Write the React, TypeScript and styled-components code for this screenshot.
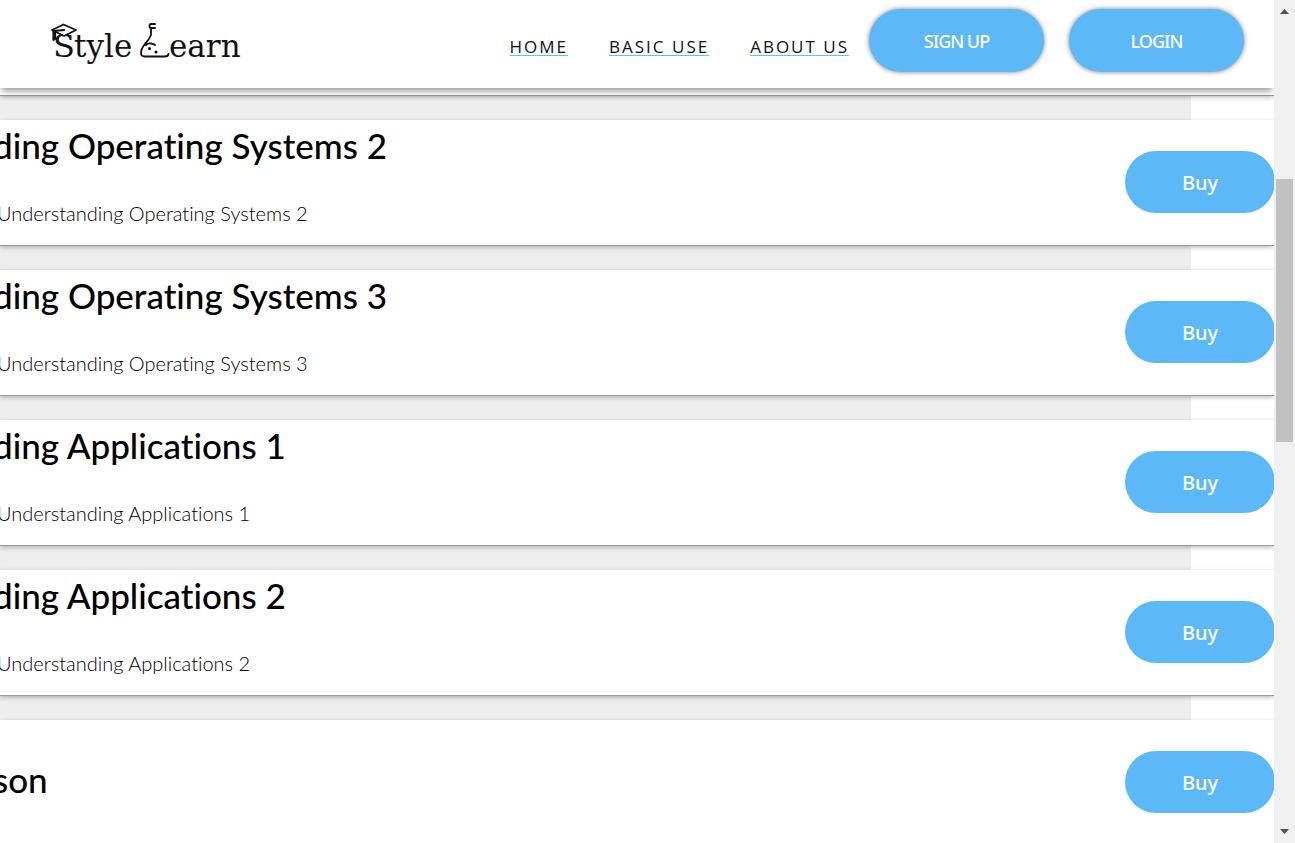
import React from "react";
import styled, { createGlobalStyle } from "styled-components";

const GlobalStyle = createGlobalStyle`
  * { box-sizing: border-box; }
  body { margin: 0; background: #fff; color: #000; font-family: Lato, "Open Sans", sans-serif; }
`;

const Page = styled.div`
  display: flex;
  height: 100vh;
  overflow: hidden;
`;

const Content = styled.div`
  flex: 1;
  min-width: 0;
  overflow: hidden;
`;

const Header = styled.header`
  position: relative;
  z-index: 1;
  display: flex;
  align-items: flex-start;
  height: 88px;
  padding: 9px 30px 0 48px;
  background: #fff;
  box-shadow: 0 5px 6px -2px rgba(0, 0, 0, 0.4);
`;

const LogoLink = styled.a`
  display: block;
  margin: 9px auto 0 0;
  line-height: 0;
`;

const Nav = styled.nav`
  display: flex;
  gap: 41px;
  padding-top: 26px;
  margin-right: 20px;
`;

const NavLink = styled.a`
  font-family: "Open Sans", sans-serif;
  font-size: 17px;
  font-weight: 400;
  line-height: 24px;
  letter-spacing: 2px;
  color: #111;
  text-decoration-line: underline;
  text-decoration-color: #5cc2ff;
  text-decoration-thickness: 1px;
  text-underline-offset: 2px;
`;

const Actions = styled.div`
  display: flex;
  gap: 25px;
`;

const Button = styled.button`
  flex: none;
  border: 0;
  border-radius: 32px;
  background: #5cb8f7;
  color: #fff;
  font-family: "Noto Sans", sans-serif;
  font-weight: 500;
`;

const HeaderButton = styled(Button)`
  width: 175px;
  height: 63px;
  font-size: 18px;
  letter-spacing: -1px;
  box-shadow: 0 0 5px rgba(0, 0, 0, 0.5);
`;

const BuyButton = styled(Button)`
  width: 150px;
  height: 62px;
  margin-right: -1px;
  font-size: 20px;
`;

const List = styled.main`
  display: flex;
  flex-direction: column;
  gap: 25px;
  margin-right: 83px;
  background: #eee;
`;

const Card = styled.article`
  display: flex;
  align-items: center;
  justify-content: space-between;
  height: 125px;
  padding-bottom: 1px;
  margin-right: -83px;
  background: #fff;
  box-shadow: 0 1px 0 #979a9a, 0 2px 5px rgba(0, 0, 0, 0.3);
`;

const CardEnd = styled(Card)`
  height: 7px;
`;

const Copy = styled.div`
  display: flex;
  flex-direction: column;
  gap: 30px;
  padding-bottom: 16px;
  margin-left: -7px;
  white-space: nowrap;
  font-variant-ligatures: none;
`;

const Title = styled.h2`
  margin: 0;
  font-size: 35px;
  font-weight: 500;
  line-height: 48px;

  &:only-child {
    padding-top: 10px;
  }
`;

const Detail = styled.p`
  margin: 0 0 0 4px;
  font-size: 20px;
  font-weight: 300;
  line-height: 28px;
`;

const Scrollbar = styled.div`
  display: flex;
  flex: none;
  flex-direction: column;
  align-items: center;
  width: 21px;
  padding: 9px 2px 9px;
  background: #f0f0f0;
`;

const Thumb = styled.div`
  width: 17px;
  height: 263px;
  margin: 165px 0 auto;
  background: #c1c1c1;
`;

const Logo = () => (
  <svg width="196" height="50" viewBox="0 0 196 50" role="img" aria-label="Style Learn">
    <g fill="#111" fontFamily="DejaVu Serif, serif" fontSize="31">
      <text x="5" y="39" fontSize="32">S</text>
      <text x="26" y="39">tyle</text>
      <text x="121" y="39">earn</text>
    </g>
    <g fill="none" stroke="#111" strokeWidth="1.8" strokeLinejoin="round" strokeLinecap="round">
      <path d="M4 12 15.500 6.500 28 12 16 18Z" fill="#fff" />
      <path d="M16 12 5.500 13V22M7 14V21" strokeWidth="2.200" />
      <path d="M107 6H103Q101.500 6 101.500 8T103 10H107M103 10V17Q101 22 97 26Q93 31 93 35Q93 38.500 97 38.500H117Q120 38.500 120.500 36M98 27Q100 25 103 25.500T107 27" />
    </g>
    <circle cx="101.500" cy="30.500" r="1.500" />
    <circle cx="108" cy="34" r="1.500" />
  </svg>
);

const courses = [
  { title: "ding Operating Systems 2", detail: "Understanding Operating Systems 2" },
  { title: "ding Operating Systems 3", detail: "Understanding Operating Systems 3" },
  { title: "ding Applications 1", detail: "Understanding Applications 1" },
  { title: "ding Applications 2", detail: "Understanding Applications 2" },
  { title: "son" },
];

export default function App() {
  return (
    <Page>
      <GlobalStyle />
      <Content>
        <Header>
          <LogoLink href="#"><Logo /></LogoLink>
          <Nav>
            <NavLink href="#home">HOME</NavLink>
            <NavLink href="#basic">BASIC USE</NavLink>
            <NavLink href="#about">ABOUT US</NavLink>
          </Nav>
          <Actions>
            <HeaderButton type="button">SIGN UP</HeaderButton>
            <HeaderButton type="button">LOGIN</HeaderButton>
          </Actions>
        </Header>
        <List>
          <CardEnd />
          {courses.map(({ title, detail }) => (
            <Card key={title}>
              <Copy>
                <Title>{title}</Title>
                {detail && <Detail>{detail}</Detail>}
              </Copy>
              <BuyButton type="button">Buy</BuyButton>
            </Card>
          ))}
        </List>
      </Content>
      <Scrollbar aria-hidden="true">
        <svg width="9" height="5" viewBox="0 0 9 5"><path d="M0 5 4.500 0 9 5Z" fill="#505050" /></svg>
        <Thumb />
        <svg width="9" height="5" viewBox="0 0 9 5"><path d="M0 0 4.500 5 9 0Z" fill="#505050" /></svg>
      </Scrollbar>
    </Page>
  );
}
